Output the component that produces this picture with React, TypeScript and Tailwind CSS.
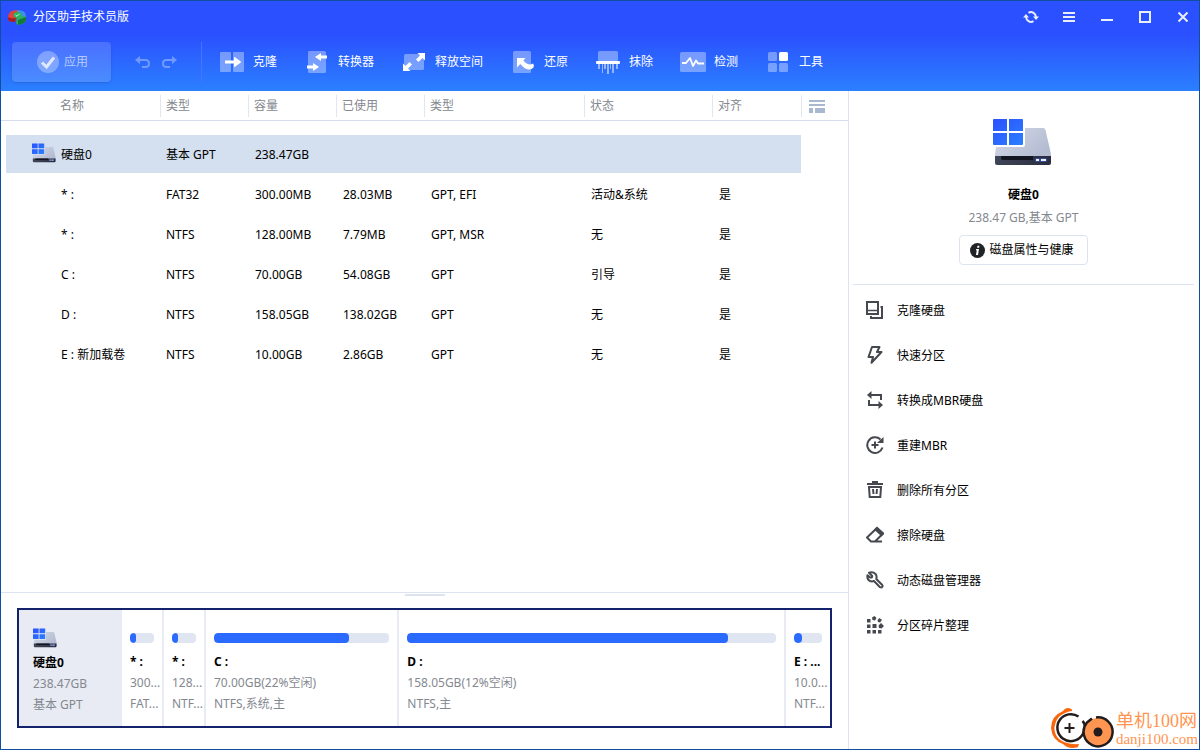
import type { ReactNode } from "react";

const DiskIcon = ({ className }: { className: string }) => (
  <svg viewBox="0 0 59 47" className={className} aria-hidden="true">
    <defs>
      <linearGradient id="diskWin" x1="0" y1="0" x2="1" y2="1">
        <stop offset="0" stopColor="#2b50ff" />
        <stop offset="1" stopColor="#2b80ff" />
      </linearGradient>
      <linearGradient id="diskTop" x1="0" y1="0" x2="1" y2="0.6">
        <stop offset="0" stopColor="#d6dbe8" />
        <stop offset="1" stopColor="#b4bcd2" />
      </linearGradient>
      <linearGradient id="diskFront" x1="0" y1="0" x2="1" y2="0">
        <stop offset="0" stopColor="#3f4558" />
        <stop offset="1" stopColor="#282c3e" />
      </linearGradient>
    </defs>
    <path d="M32 9H50Q52 9 52.500 11L58 35V38H2V35L3 28H30Q32 28 32 26Z" fill="url(#diskTop)" />
    <path d="M2 37H58V44Q58 46 56 46H4Q2 46 2 44Z" fill="url(#diskFront)" />
    <path d="M8 37H40V41H10Q8 41 8 39Z" fill="#14161f" />
    <rect x="42" y="39" width="5" height="4" rx="1" fill="#3a5bd0" fillOpacity=".6" />
    <rect x="47" y="39" width="7" height="4" rx="1" fill="#3a5bd0" fillOpacity=".6" />
    <rect x="43" y="40" width="3" height="2" fill="#eef3ff" />
    <rect x="48" y="40" width="5" height="2" fill="#eef3ff" />
    <path d="M1 0H14V12H0V1Q0 0 1 0ZM16 0H29Q30 0 30 1V12H16ZM0 14H14V26H1Q0 26 0 25ZM16 14H30V25Q30 26 29 26H16Z" fill="url(#diskWin)" />
  </svg>
);

const AppLogo = () => (
  <svg viewBox="0 0 18 15" className="h-[15px] w-[18px]" aria-hidden="true">
    <path d="M9 0Q18 0 18 6V8L9 7Z" fill="#3f8fe8" />
    <path d="M9 6L18 6.500V10Q17 14 10 15L8 13Z" fill="#2fae60" />
    <path d="M10 10L18 7V10Q17 14 10 15Z" fill="#147a3a" />
    <path d="M0 6Q1 0 9 0L10 5L8 9L7 12Q0 12 0 9Z" fill="#e0433c" />
    <path d="M0 7Q3 9 8 8L7 12Q0 12 0 9Z" fill="#a61f22" />
    <ellipse cx="9.500" cy="5" rx="4" ry="3" fill="#27b45b" />
    <path d="M7.500 5L9 6.300L11.500 3.800" fill="none" stroke="#c9f5d8" strokeWidth="1" />
  </svg>
);

const tools: { label: string; icon: ReactNode }[] = [
  {
    label: "克隆",
    icon: (
      <svg viewBox="0 0 24 20" className="h-5 w-6">
        <path d="M1 0H10Q11 0 11 1V19Q11 20 10 20H1Q0 20 0 19V1Q0 0 1 0ZM14 0H23Q24 0 24 1V19Q24 20 23 20H14Q13 20 13 19V1Q13 0 14 0Z" fill="#fff" fillOpacity=".36" />
        <path d="M5 8.500H14V5.500Q14 4.500 15 5.300L20.500 9.200Q21.500 10 20.500 10.800L15 14.700Q14 15.500 14 14.500V11.500H5Z" fill="#fff" />
      </svg>
    ),
  },
  {
    label: "转换器",
    icon: (
      <svg viewBox="0 0 20 22" className="h-[22px] w-5">
        <rect x="1" width="18" height="22" rx="1.500" fill="#fff" fillOpacity=".36" />
        <path d="M20 4.500H14V2L8 6L14 10V7.500H20ZM0 14.500H6V12L12 16L6 20V17.500H0Z" fill="#fff" />
      </svg>
    ),
  },
  {
    label: "释放空间",
    icon: (
      <svg viewBox="0 0 22 18" className="h-[18px] w-[22px]">
        <rect x="1" y="1" width="20" height="16" rx="1.500" fill="#fff" fillOpacity=".36" />
        <path d="M14.500 0H22V7.500L19.500 5L15.500 9L13 6.500L17 2.500ZM7.500 18H0V10.500L2.500 13L6.500 9L9 11.500L5 15.500Z" fill="#fff" />
      </svg>
    ),
  },
  {
    label: "还原",
    icon: (
      <svg viewBox="0 0 22 22" className="ml-0.5 h-[22px] w-[22px]">
        <rect width="18" height="22" rx="1.500" fill="#fff" fillOpacity=".36" />
        <path d="M4 7H12.500L10.300 9.500Q15.500 15.500 20 12.500Q21.500 14 20.500 16.500Q18.500 18.800 15.500 18.500Q11.500 18 7.300 13L4 16.500Z" fill="#fff" />
      </svg>
    ),
  },
  {
    label: "抹除",
    icon: (
      <svg viewBox="0 0 24 23" className="h-[23px] w-6">
        <rect x="2" width="20" height="10" rx="1.500" fill="#fff" fillOpacity=".36" />
        <path d="M2 13H4V18H2ZM6 13H7V22H6ZM8 13H10V18H8ZM11 13H13V23H11ZM14 13H15V18H14ZM16 13H18V22H16ZM20 13H22V18H20Z" fill="#fff" fillOpacity=".5" />
        <rect y="10" width="24" height="3" rx="1" fill="#fff" />
      </svg>
    ),
  },
  {
    label: "检测",
    icon: (
      <svg viewBox="0 0 26 20" className="h-5 w-[26px]">
        <rect width="26" height="20" rx="1.500" fill="#fff" fillOpacity=".36" />
        <path d="M2 11H6L10 6L13 14L16 8.500L18 11.500H24" fill="none" stroke="#fff" strokeWidth="1.800" strokeLinejoin="round" />
      </svg>
    ),
  },
  {
    label: "工具",
    icon: (
      <svg viewBox="0 0 20 20" className="h-5 w-5">
        <g fill="#fff" fillOpacity=".36">
          <rect width="9" height="9" rx="1.500" />
          <rect y="11" width="9" height="9" rx="1.500" />
          <rect x="11" y="11" width="9" height="9" rx="1.500" />
        </g>
        <rect x="11" width="9" height="9" rx="1.500" fill="#fff" />
      </svg>
    ),
  },
];

const windowButtons: { label: string; icon: ReactNode }[] = [
  {
    label: "刷新",
    icon: (
      <svg viewBox="0 0 16 12" className="h-3 w-4" fill="none" stroke="#e9eeff" strokeWidth="2">
        <path d="M5.500 1.800Q8 .4 10.500 1.800Q12.700 3 13 6M10.500 10.200Q8 11.600 5.500 10.200Q3.300 9 3 6" />
        <path d="M10 5.500H16L13 9ZM0 6.500H6L3 3Z" fill="#e9eeff" stroke="none" />
      </svg>
    ),
  },
  {
    label: "菜单",
    icon: (
      <svg viewBox="0 0 12 10" className="h-2.5 w-3" fill="#e9eeff">
        <path d="M0 0H12V2H0ZM0 4H12V6H0ZM0 8H12V10H0Z" />
      </svg>
    ),
  },
  {
    label: "最小化",
    icon: (
      <svg viewBox="0 0 12 12" className="h-3 w-3" fill="#e9eeff">
        <path d="M0 8H12V10H0Z" />
      </svg>
    ),
  },
  {
    label: "最大化",
    icon: (
      <svg viewBox="0 0 12 12" className="h-3 w-3" fill="none" stroke="#e9eeff" strokeWidth="2">
        <rect x="1" y="1" width="10" height="10" />
      </svg>
    ),
  },
  {
    label: "关闭",
    icon: (
      <svg viewBox="0 0 12 12" className="h-3 w-3" fill="none" stroke="#e9eeff" strokeWidth="2">
        <path d="M1.500 1.500L10.500 10.500M10.500 1.500L1.500 10.500" />
      </svg>
    ),
  },
];

const columns = ["类型", "容量", "已使用", "类型", "状态", "对齐"];

const rows = [
  ["硬盘0", "基本 GPT", "238.47GB", "", "", "", ""],
  ["* :", "FAT32", "300.00MB", "28.03MB", "GPT, EFI", "活动&系统", "是"],
  ["* :", "NTFS", "128.00MB", "7.79MB", "GPT, MSR", "无", "是"],
  ["C :", "NTFS", "70.00GB", "54.08GB", "GPT", "引导", "是"],
  ["D :", "NTFS", "158.05GB", "138.02GB", "GPT", "无", "是"],
  ["E : 新加载卷", "NTFS", "10.00GB", "2.86GB", "GPT", "无", "是"],
];

const partitions = [
  { name: "* :", size: "300...", fs: "FAT...", used: 25, width: "w-[42px]" },
  { name: "* :", size: "128...", fs: "NTF...", used: 25, width: "w-[42px]" },
  { name: "C :", size: "70.00GB(22%空闲)", fs: "NTFS,系统,主", used: 77, width: "flex-[184]" },
  { name: "D :", size: "158.05GB(12%空闲)", fs: "NTFS,主", used: 87, width: "flex-[378]" },
  { name: "E : ...", size: "10.0...", fs: "NTF...", used: 29, width: "w-[44px]" },
];

const actions: { label: string; icon: ReactNode }[] = [
  {
    label: "克隆硬盘",
    icon: (
      <>
        <path d="M1 1H12V13H1Z" />
        <path d="M1 9.500H12" strokeWidth="1.500" />
        <path d="M14.500 6H16V17H5V15" />
      </>
    ),
  },
  {
    label: "快速分区",
    icon: <path d="M6 1H13.500L11 6H15.500L5.500 16.800L7 11H2.500Z" strokeLinejoin="round" />,
  },
  {
    label: "转换成MBR硬盘",
    icon: (
      <>
        <path d="M4 4H15V9M14 14H3V9" />
        <path d="M5.500 0V8L1 4ZM12.500 10V18L17 14Z" fill="#45484f" stroke="none" />
      </>
    ),
  },
  {
    label: "重建MBR",
    icon: (
      <>
        <path d="M14.500 3.500A7.800 7.800 0 1 0 16.500 11.500M9 5.500V12.500M5.500 9H12.500" />
        <path d="M17.500 1V7H11Z" fill="#45484f" stroke="none" />
      </>
    ),
  },
  {
    label: "删除所有分区",
    icon: <path d="M1 3H17M6 1H12M3 6H15L14.300 16H3.700ZM7 8L7.500 13M11 8L10.500 13" />,
  },
  {
    label: "擦除硬盘",
    icon: (
      <>
        <path d="M11 2L17 7.500L9 15.500H5L1 11.500ZM5 15.500H16" strokeLinejoin="round" />
        <path d="M11 2L17 7.500L15.500 9L9.500 3.500Z" fill="#45484f" />
      </>
    ),
  },
  {
    label: "动态磁盘管理器",
    icon: (
      <path
        d="M3 1.800L6.200 5L5.800 6.500L4.200 6.500L1.500 4.200Q.8 8.500 4 10Q6 10.800 8 10L14 16.200Q15.500 17 16.300 15.800Q17 14.800 16 13.800L10.300 8Q11.200 5 9.500 3Q7 .5 3 1.800Z"
        strokeLinejoin="round"
      />
    ),
  },
  {
    label: "分区碎片整理",
    icon: (
      <path
        d="M1 3H4.500V6.500H1ZM1 8.500H4.500V12H1ZM1 14H4.500V17.500H1ZM6.500 14H10V17.500H6.500ZM6.500 8H10.500V12H6.500ZM12 14H15.500V17.500H12ZM12.500 9.500L15 7L18 10L15.500 12.500L13 12ZM6 1.500L8.500 0L10.500 2L9 4.500L6.500 4ZM11.500 4L13.500 2L16 4L14 6.500L12 6Z"
        fill="#45484f"
        stroke="none"
      />
    ),
  },
];

const Header = () => (
  <header className="bg-[linear-gradient(to_bottom,#2b50ff_0px,#2b50ff_33px,#2b80ff_90px)] text-white">
    <div className="flex h-8 items-center pr-1 pl-[7px]">
      <AppLogo />
      <h1 className="ml-[7px] flex-1">分区助手技术员版</h1>
      <div className="flex gap-3.5">
        {windowButtons.map((b) => (
          <button key={b.label} type="button" aria-label={b.label} className="flex size-6 items-center justify-center">
            {b.icon}
          </button>
        ))}
      </div>
    </div>
    <div className="flex h-[58px] items-center pl-[11px]">
      <button
        type="button"
        className="flex h-10 w-[99px] items-center gap-[5px] rounded bg-white/15 pl-[25px] text-white/60 shadow-sm"
      >
        <svg viewBox="0 0 22 22" className="size-[22px]" aria-hidden="true">
          <circle cx="11" cy="11" r="11" fill="#fff" fillOpacity=".3" />
          <path d="M5 11.500L9.500 16L17 6.500" fill="none" stroke="#fff" strokeOpacity=".75" strokeWidth="3" />
        </svg>
        应用
      </button>
      <button type="button" aria-label="撤销" className="ml-6">
        <svg viewBox="0 0 16 14" className="h-3.5 w-4" fill="none" stroke="#7299ff" strokeWidth="2">
          <path d="M4 5H10.500Q14 5 14 8.500Q14 12 10.500 12H7" />
          <path d="M5 1V9L0 5Z" fill="#7299ff" stroke="none" />
        </svg>
      </button>
      <button type="button" aria-label="重做" className="ml-2.5">
        <svg viewBox="0 0 16 14" className="h-3.5 w-4" fill="none" stroke="#7299ff" strokeWidth="2">
          <path d="M12 5H5.500Q2 5 2 8.500Q2 12 5.500 12H9" />
          <path d="M11 1V9L16 5Z" fill="#7299ff" stroke="none" />
        </svg>
      </button>
      <div className="ml-6 h-10 w-px bg-[#4674ff]" />
      <nav className="ml-4 flex gap-[26px]">
        {tools.map((t) => (
          <button key={t.label} type="button" className="flex h-10 items-center gap-[7px] whitespace-nowrap">
            <span className="flex w-7 justify-center">{t.icon}</span>
            {t.label}
          </button>
        ))}
      </nav>
    </div>
  </header>
);

const PartitionTable = () => (
  <table className="w-full table-fixed border-separate border-spacing-0 text-left">
    <colgroup>
      <col className="w-[5px]" />
      <col className="w-[154px]" />
      <col className="w-[88px]" />
      <col className="w-[88px]" />
      <col className="w-[88px]" />
      <col className="w-[160px]" />
      <col className="w-[128px]" />
      <col className="w-[89px]" />
      <col />
    </colgroup>
    <thead className="text-[#84888f]">
      <tr className="h-[30px]">
        <td className="border-b border-[#d5deec]" />
        <th className="border-b border-[#d5deec] pl-[54px] font-normal">名称</th>
        {columns.map((c, i) => (
          <th key={i} className="border-b border-[#d5deec] font-normal">
            <div className="h-[22px] border-l border-[#e1e7f1] pl-[5px] leading-[22px]">{c}</div>
          </th>
        ))}
        <td className="border-b border-[#d5deec]">
          <button type="button" aria-label="列设置" className="flex h-[22px] items-center border-l border-[#e1e7f1] pl-[7px]">
            <svg viewBox="0 0 16 14" className="h-3.5 w-4" fill="#a9b7cf">
              <path d="M0 1H16V3H0ZM0 5H16V7H0ZM0 9H4V14H0ZM6 9H16V14H6Z" />
            </svg>
          </button>
        </td>
      </tr>
    </thead>
    <tbody>
      <tr className="h-[13px]" aria-hidden="true">
        <td colSpan={9} />
      </tr>
      {rows.map((row, i) => (
        <tr key={i} className="h-10">
          <td />
          {row.map((cell, j) => (
            <td
              key={j}
              className={`border-y border-transparent bg-clip-padding pt-0.5 whitespace-nowrap ${i === 0 ? "bg-[#d4dfef]" : ""} ${
                j === 1 ? "pl-1.5" : j > 0 ? "pl-[7px]" : i === 0 ? "pl-[26px]" : "pl-[55px]"
              }`}
            >
              {i === 0 && j === 0 ? (
                <div className="flex items-center gap-[5px]">
                  <DiskIcon className="mb-1 h-5 w-6" />
                  {cell}
                </div>
              ) : (
                cell
              )}
            </td>
          ))}
          <td />
        </tr>
      ))}
    </tbody>
  </table>
);

const DiskMap = () => (
  <section className="border-t border-[#dde3f0]">
    <div className="mx-auto mt-px h-0.5 w-10 bg-[#dde3f0]" />
    <div className="mx-4 mt-3 mb-[21px] flex h-[120px] border-2 border-[#14216b] leading-[21px]">
      <div className="w-[103px] bg-[#e8ebf3] pt-[18px] pl-3.5 text-[#84888f]">
        <DiskIcon className="mb-1 h-5 w-6" />
        <p className="font-bold text-black">硬盘0</p>
        <p>238.47GB</p>
        <p>基本 GPT</p>
      </div>
      {partitions.map((p, i) => (
        <div
          key={i}
          className={`${p.width} overflow-hidden border-r-2 border-[#e8ebf3] pt-[23px] pl-2 whitespace-nowrap text-[#84888f] last:border-r-0`}
        >
          <div className="mr-2 mb-2 h-2.5 overflow-hidden rounded-sm bg-[#dfe6f2]">
            <div className="h-full rounded-sm bg-[#2b6aff]" style={{ width: `${p.used}%` }} />
          </div>
          <p className="font-bold text-black">{p.name}</p>
          <p>{p.size}</p>
          <p>{p.fs}</p>
        </div>
      ))}
    </div>
  </section>
);

const Sidebar = () => (
  <aside className="w-[351px] shrink-0 border-l border-[#dde3f0]">
    <div className="mr-[5px] ml-1 flex flex-col items-center border-b border-[#dde3f0] pt-7 pb-[19px]">
      <DiskIcon className="mr-[3px] h-[47px] w-[59px]" />
      <h2 className="mt-[18px] leading-[22px] font-bold">硬盘0</h2>
      <p className="pt-px leading-[22px] text-[#84888f]">238.47 GB,基本 GPT</p>
      <button
        type="button"
        className="mt-1.5 flex h-[30px] items-center gap-1 rounded border border-[#dde3f0] pr-[13px] pl-2.5"
      >
        <svg viewBox="0 0 15 15" className="size-[15px]" aria-hidden="true">
          <circle cx="7.500" cy="7.500" r="7.500" fill="#202226" />
          <path d="M7.500 2.800H9.500L9.100 4.800H7.100ZM6.200 6H9L8 12H6L6.700 7.300H5.900Z" fill="#fff" />
        </svg>
        磁盘属性与健康
      </button>
    </div>
    <ul className="pt-[3px]">
      {actions.map((a) => (
        <li key={a.label}>
          <button type="button" className="flex h-[45px] w-full items-center gap-[13px] pl-[17px]">
            <svg
              viewBox="0 0 18 18"
              className="mb-0.5 size-[18px]"
              fill="none"
              stroke="#45484f"
              strokeWidth="2"
              aria-hidden="true"
            >
              {a.icon}
            </svg>
            {a.label}
          </button>
        </li>
      ))}
    </ul>
  </aside>
);

const Watermark = () => (
  <div className="absolute right-px bottom-0 flex items-end gap-px overflow-hidden font-['Liberation_Serif','Noto_Sans_CJK_SC',serif] text-[#ff9550]">
    <svg viewBox="0 0 64 42" className="h-[42px] w-16" fill="none" aria-hidden="true">
      <path d="M21 2.500Q15 -1 12 4Q0 9 0 21Q1 33 12 37Q18 43 27 40L28 37Q15 38 8 32Q3 27 3.500 20Q5 10 13 6.500Q17 4 21 4Z" fill="#f9660e" />
      <path d="M27.500 9.500A13.500 13.500 0 1 0 30.500 29Q34 25 34 19.500Q34 16.500 31.500 14" stroke="#231c1d" strokeWidth="2.500" />
      <path d="M18.500 16V26M13.500 21H23.500" stroke="#231c1d" strokeWidth="2" />
      <circle cx="47" cy="25" r="14" fill="#ff9550" />
      <path d="M45 10.500A14.500 14.500 0 1 1 36 15.500L41 11.500" stroke="#231c1d" strokeWidth="2.500" />
      <circle cx="47" cy="25" r="4.500" fill="#231c1d" />
    </svg>
    <div>
      <p className="text-lg leading-[18px]">单机100网</p>
      <p className="text-[15px] leading-[19px]">danji100.com</p>
    </div>
  </div>
);

export default function App() {
  return (
    <div className="relative flex min-h-screen flex-col border border-[#0e4fa0] bg-white font-['Noto_Sans','Noto_Sans_CJK_SC',sans-serif] text-xs text-black">
      <Header />
      <div className="flex flex-1">
        <main className="flex min-w-0 flex-1 flex-col">
          <div className="flex-1">
            <PartitionTable />
          </div>
          <DiskMap />
        </main>
        <Sidebar />
      </div>
      <Watermark />
    </div>
  );
}
